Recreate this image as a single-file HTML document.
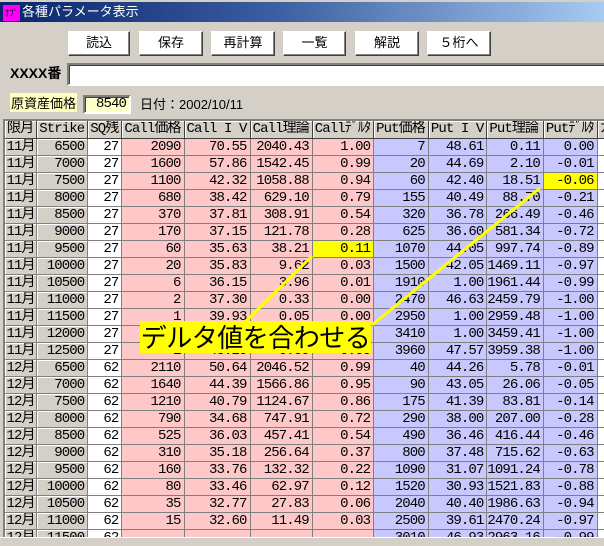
<!DOCTYPE html>
<html><head><meta charset="utf-8">
<style>
*{margin:0;padding:0;box-sizing:border-box}
body{width:604px;height:546px;overflow:hidden;background:#d4d0c8;position:relative;font-family:"Liberation Sans","Noto Sans CJK JP",sans-serif;font-size:13px;color:#000}
.title{position:absolute;left:0;top:2px;width:604px;height:20px;background:linear-gradient(90deg,#0a246a,#3a5ea0 45%,#a6caf0);color:#fff;font-size:13px;line-height:20px;padding-left:22px}
.icon{position:absolute;left:3px;top:3px;width:17px;height:16px;background:#f0f;color:#000;font-size:9px;line-height:16px;text-align:center}
.btn{position:absolute;top:31px;height:25px;background:#fff;border:1px solid;border-color:#fff #404040 #404040 #fff;box-shadow:inset -1px -1px 0 #808080;text-align:center;line-height:22px;font-size:13px}
.lbl{position:absolute;font-size:13px}
.inp{position:absolute;background:#fff;border:2px solid;border-color:#808080 #fff #fff #808080;box-shadow:inset 1px 1px 0 #404040}
.grid{position:absolute;left:3px;top:119px;width:601px;height:418px;overflow:hidden;border-left:2px solid #808080;border-top:2px solid #808080;box-shadow:inset 1px 1px 0 #404040}
table{border-collapse:collapse;table-layout:fixed;font-family:"Liberation Mono","Noto Sans CJK JP",monospace;font-size:14px;letter-spacing:-0.9px}
td{height:17px;border-right:1px solid #808080;border-bottom:1px solid #808080;padding:0 3px 0 0;text-align:right;line-height:16px;white-space:nowrap;overflow:hidden}
tr.h td{background:#d4d0c8;text-align:left;padding-left:2px;box-shadow:inset 1px 1px 0 #fff;border-color:#404040}
td.g{background:#d4d0c8;box-shadow:inset 1px 1px 0 #fff}
td.m{text-align:center;padding:0}
td.w{background:#fff}
td.c{background:#ffc8c8}
td.p{background:#c8c8ff}
td.y{background:#ffff00}
.bot{position:absolute;left:0;top:537px;width:604px;height:9px;background:#d4d0c8;border-top:1px solid #fff}
</style></head><body>
<div class="title"><div class="icon">ｵﾌﾟ</div>各種パラメータ表示</div>
<div class="btn" style="left:68px;width:62px">読込</div>
<div class="btn" style="left:139px;width:64px">保存</div>
<div class="btn" style="left:211px;width:64px">再計算</div>
<div class="btn" style="left:283px;width:63px">一覧</div>
<div class="btn" style="left:355px;width:64px">解説</div>
<div class="btn" style="left:427px;width:64px">５桁へ</div>
<div class="lbl" style="left:10px;top:63px;font-weight:bold;font-size:14px">XXXX番</div>
<div class="inp" style="left:67px;top:63px;width:540px;height:23px"></div>
<div class="lbl" style="left:10px;top:93px;background:#ffffc0;padding:0 1px">原資産価格</div>
<div class="inp" style="left:83px;top:95px;width:48px;height:19px;background:#ffffc8;text-align:right;padding-right:3px;font-family:'Liberation Mono',monospace;font-size:14px;letter-spacing:-0.9px;line-height:15px">8540</div>
<div class="lbl" style="left:140px;top:94px">日付：2002/10/11</div>
<div class="grid"><table>
<colgroup><col style="width:34px"><col style="width:48px"><col style="width:34px"><col style="width:62px"><col style="width:62px"><col style="width:63px"><col style="width:63px"><col style="width:56px"><col style="width:55px"><col style="width:56px"><col style="width:56px"><col style="width:20px"></colgroup>
<tr class="h"><td>限月</td><td>Strike</td><td>SQ残</td><td>Call価格</td><td>Call I V</td><td>Call理論</td><td>Callﾃﾞﾙﾀ</td><td>Put価格</td><td>Put I V</td><td>Put理論</td><td>Putﾃﾞﾙﾀ</td><td>カ</td></tr>
<tr><td class="g m">11月</td><td class="g">6500</td><td class="w">27</td><td class="c">2090</td><td class="c">70.55</td><td class="c">2040.43</td><td class="c">1.00</td><td class="p">7</td><td class="p">48.61</td><td class="p">0.11</td><td class="p">0.00</td><td class="w"></td></tr>
<tr><td class="g m">11月</td><td class="g">7000</td><td class="w">27</td><td class="c">1600</td><td class="c">57.86</td><td class="c">1542.45</td><td class="c">0.99</td><td class="p">20</td><td class="p">44.69</td><td class="p">2.10</td><td class="p">-0.01</td><td class="w"></td></tr>
<tr><td class="g m">11月</td><td class="g">7500</td><td class="w">27</td><td class="c">1100</td><td class="c">42.32</td><td class="c">1058.88</td><td class="c">0.94</td><td class="p">60</td><td class="p">42.40</td><td class="p">18.51</td><td class="y">-0.06</td><td class="w"></td></tr>
<tr><td class="g m">11月</td><td class="g">8000</td><td class="w">27</td><td class="c">680</td><td class="c">38.42</td><td class="c">629.10</td><td class="c">0.79</td><td class="p">155</td><td class="p">40.49</td><td class="p">88.70</td><td class="p">-0.21</td><td class="w"></td></tr>
<tr><td class="g m">11月</td><td class="g">8500</td><td class="w">27</td><td class="c">370</td><td class="c">37.81</td><td class="c">308.91</td><td class="c">0.54</td><td class="p">320</td><td class="p">36.78</td><td class="p">266.49</td><td class="p">-0.46</td><td class="w"></td></tr>
<tr><td class="g m">11月</td><td class="g">9000</td><td class="w">27</td><td class="c">170</td><td class="c">37.15</td><td class="c">121.78</td><td class="c">0.28</td><td class="p">625</td><td class="p">36.60</td><td class="p">581.34</td><td class="p">-0.72</td><td class="w"></td></tr>
<tr><td class="g m">11月</td><td class="g">9500</td><td class="w">27</td><td class="c">60</td><td class="c">35.63</td><td class="c">38.21</td><td class="y">0.11</td><td class="p">1070</td><td class="p">44.05</td><td class="p">997.74</td><td class="p">-0.89</td><td class="w"></td></tr>
<tr><td class="g m">11月</td><td class="g">10000</td><td class="w">27</td><td class="c">20</td><td class="c">35.83</td><td class="c">9.62</td><td class="c">0.03</td><td class="p">1500</td><td class="p">42.05</td><td class="p">1469.11</td><td class="p">-0.97</td><td class="w"></td></tr>
<tr><td class="g m">11月</td><td class="g">10500</td><td class="w">27</td><td class="c">6</td><td class="c">36.15</td><td class="c">3.96</td><td class="c">0.01</td><td class="p">1910</td><td class="p">1.00</td><td class="p">1961.44</td><td class="p">-0.99</td><td class="w"></td></tr>
<tr><td class="g m">11月</td><td class="g">11000</td><td class="w">27</td><td class="c">2</td><td class="c">37.30</td><td class="c">0.33</td><td class="c">0.00</td><td class="p">2470</td><td class="p">46.63</td><td class="p">2459.79</td><td class="p">-1.00</td><td class="w"></td></tr>
<tr><td class="g m">11月</td><td class="g">11500</td><td class="w">27</td><td class="c">1</td><td class="c">39.93</td><td class="c">0.05</td><td class="c">0.00</td><td class="p">2950</td><td class="p">1.00</td><td class="p">2959.48</td><td class="p">-1.00</td><td class="w"></td></tr>
<tr><td class="g m">11月</td><td class="g">12000</td><td class="w">27</td><td class="c">1</td><td class="c">42.10</td><td class="c">0.01</td><td class="c">0.00</td><td class="p">3410</td><td class="p">1.00</td><td class="p">3459.41</td><td class="p">-1.00</td><td class="w"></td></tr>
<tr><td class="g m">11月</td><td class="g">12500</td><td class="w">27</td><td class="c">1</td><td class="c">45.20</td><td class="c">0.00</td><td class="c">0.00</td><td class="p">3960</td><td class="p">47.57</td><td class="p">3959.38</td><td class="p">-1.00</td><td class="w"></td></tr>
<tr><td class="g m">12月</td><td class="g">6500</td><td class="w">62</td><td class="c">2110</td><td class="c">50.64</td><td class="c">2046.52</td><td class="c">0.99</td><td class="p">40</td><td class="p">44.26</td><td class="p">5.78</td><td class="p">-0.01</td><td class="w"></td></tr>
<tr><td class="g m">12月</td><td class="g">7000</td><td class="w">62</td><td class="c">1640</td><td class="c">44.39</td><td class="c">1566.86</td><td class="c">0.95</td><td class="p">90</td><td class="p">43.05</td><td class="p">26.06</td><td class="p">-0.05</td><td class="w"></td></tr>
<tr><td class="g m">12月</td><td class="g">7500</td><td class="w">62</td><td class="c">1210</td><td class="c">40.79</td><td class="c">1124.67</td><td class="c">0.86</td><td class="p">175</td><td class="p">41.39</td><td class="p">83.81</td><td class="p">-0.14</td><td class="w"></td></tr>
<tr><td class="g m">12月</td><td class="g">8000</td><td class="w">62</td><td class="c">790</td><td class="c">34.68</td><td class="c">747.91</td><td class="c">0.72</td><td class="p">290</td><td class="p">38.00</td><td class="p">207.00</td><td class="p">-0.28</td><td class="w"></td></tr>
<tr><td class="g m">12月</td><td class="g">8500</td><td class="w">62</td><td class="c">525</td><td class="c">36.03</td><td class="c">457.41</td><td class="c">0.54</td><td class="p">490</td><td class="p">36.46</td><td class="p">416.44</td><td class="p">-0.46</td><td class="w"></td></tr>
<tr><td class="g m">12月</td><td class="g">9000</td><td class="w">62</td><td class="c">310</td><td class="c">35.18</td><td class="c">256.64</td><td class="c">0.37</td><td class="p">800</td><td class="p">37.48</td><td class="p">715.62</td><td class="p">-0.63</td><td class="w"></td></tr>
<tr><td class="g m">12月</td><td class="g">9500</td><td class="w">62</td><td class="c">160</td><td class="c">33.76</td><td class="c">132.32</td><td class="c">0.22</td><td class="p">1090</td><td class="p">31.07</td><td class="p">1091.24</td><td class="p">-0.78</td><td class="w"></td></tr>
<tr><td class="g m">12月</td><td class="g">10000</td><td class="w">62</td><td class="c">80</td><td class="c">33.46</td><td class="c">62.97</td><td class="c">0.12</td><td class="p">1520</td><td class="p">30.93</td><td class="p">1521.83</td><td class="p">-0.88</td><td class="w"></td></tr>
<tr><td class="g m">12月</td><td class="g">10500</td><td class="w">62</td><td class="c">35</td><td class="c">32.77</td><td class="c">27.83</td><td class="c">0.06</td><td class="p">2040</td><td class="p">40.40</td><td class="p">1986.63</td><td class="p">-0.94</td><td class="w"></td></tr>
<tr><td class="g m">12月</td><td class="g">11000</td><td class="w">62</td><td class="c">15</td><td class="c">32.60</td><td class="c">11.49</td><td class="c">0.03</td><td class="p">2500</td><td class="p">39.61</td><td class="p">2470.24</td><td class="p">-0.97</td><td class="w"></td></tr>
<tr><td class="g m">12月</td><td class="g">11500</td><td class="w">62</td><td class="c"></td><td class="c"></td><td class="c"></td><td class="c"></td><td class="p">3010</td><td class="p">46.93</td><td class="p">2963.16</td><td class="p">-0.99</td><td class="w"></td></tr>
</table></div>
<svg style="position:absolute;left:0;top:0" width="604" height="546"><g stroke="#ffff00" stroke-width="3"><line x1="312" y1="256" x2="245" y2="322"/><line x1="540" y1="188" x2="372" y2="325"/></g></svg>
<div style="position:absolute;left:140px;top:321px;width:231px;height:32px;background:#ffff00;font-size:26px;line-height:32px;text-align:center;font-family:'Noto Sans CJK JP',sans-serif;letter-spacing:-0.5px">デルタ値を合わせる</div>
<div class="bot"></div>
</body></html>
